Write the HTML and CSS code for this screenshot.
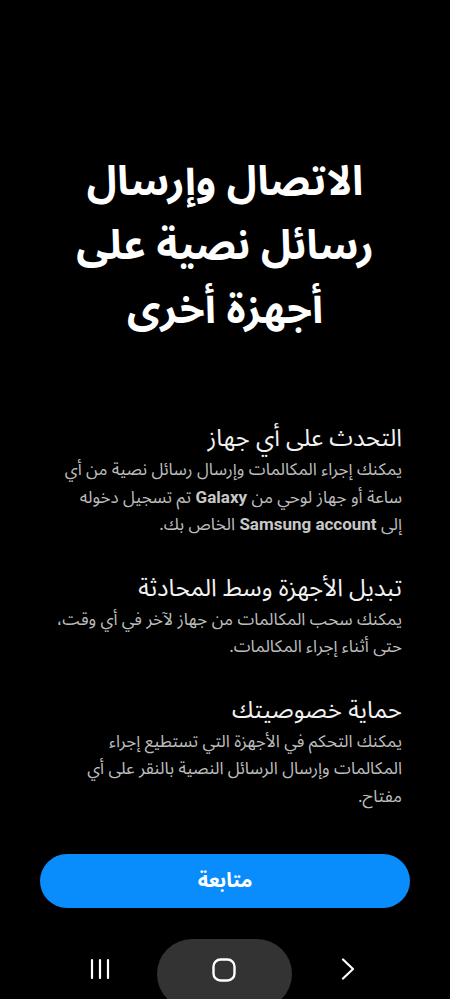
FILE: index.html
```html
<!DOCTYPE html>
<html lang="ar" dir="rtl">
<head>
    <meta charset="UTF-8">
    <meta name="viewport" content="width=device-width, initial-scale=1.0">
    <title>الاتصال وإرسال رسائل نصية</title>
    <link rel="stylesheet" href="styles.css">
</head>
<body>
    <div class="screen">
        <h1 class="title">الاتصال وإرسال رسائل نصية على أجهزة أخرى</h1>

        <div class="features">
            <div class="feature">
                <h2>التحدث على أي جهاز</h2>
                <p>يمكنك إجراء المكالمات وإرسال رسائل نصية من أي ساعة أو جهاز لوحي من <b>Galaxy</b> تم تسجيل دخوله إلى&nbsp;<b>Samsung&nbsp;account</b> الخاص بك.</p>
            </div>
            <div class="feature">
                <h2>تبديل الأجهزة وسط المحادثة</h2>
                <p>يمكنك سحب المكالمات من جهاز لآخر في أي وقت، حتى أثناء إجراء المكالمات.</p>
            </div>
            <div class="feature">
                <h2>حماية خصوصيتك</h2>
                <p>يمكنك التحكم في الأجهزة التي تستطيع إجراء المكالمات وإرسال الرسائل النصية بالنقر على أي مفتاح.</p>
            </div>
        </div>

        <button class="continue">متابعة</button>

        <nav class="navbar" dir="ltr">
            <span class="nav-btn">
                <svg width="22" height="22" viewBox="0 0 22 22"><path d="M3 2v18M11 2v18M19 2v18" stroke="#fff" stroke-width="2.2" stroke-linecap="round"/></svg>
            </span>
            <span class="nav-home">
                <svg width="24" height="24" viewBox="0 0 24 24"><rect x="1.5" y="1.5" width="21" height="21" rx="7" fill="none" stroke="#fff" stroke-width="2.4"/></svg>
            </span>
            <span class="nav-btn">
                <svg width="22" height="22" viewBox="0 0 22 22"><path d="M6 1.5l10 9.5-10 9.5" fill="none" stroke="#fff" stroke-width="2.2" stroke-linecap="round" stroke-linejoin="round"/></svg>
            </span>
        </nav>
    </div>
</body>
</html>
```

FILE: styles.css
```css
* {
    margin: 0;
    padding: 0;
    box-sizing: border-box;
}

body {
    background: #000;
    color: #fff;
    font-family: 'Noto Sans Arabic', 'DejaVu Sans', 'Noto Sans', sans-serif;
}

.screen {
    width: 450px;
    height: 999px;
    display: flex;
    flex-direction: column;
    overflow: hidden;
}

.title {
    margin: 150px 66px 0;
    font-size: 41px;
    font-weight: bold;
    line-height: 64px;
    text-align: center;
}

.features {
    margin-top: 80px;
    padding: 0 48px;
    display: flex;
    flex-direction: column;
    gap: 32px;
}

.feature h2 {
    font-size: 24px;
    font-weight: normal;
    line-height: 34px;
    color: #f2f2f2;
}

.feature p {
    margin-top: 1px;
    font-size: 17px;
    line-height: 27.5px;
    color: #bdbdbd;
}

.feature b {
    font-family: 'Roboto', 'Liberation Sans', sans-serif;
    line-height: 1;
    color: #c8c8c8;
}

.continue {
    margin: auto 40px 0;
    height: 54px;
    border: none;
    border-radius: 27px;
    background: #0a8dfc;
    color: #fff;
    font-family: inherit;
    font-size: 20px;
    font-weight: bold;
}

.navbar {
    margin-top: 31px;
    height: 60px;
    display: flex;
    justify-content: space-between;
    align-items: flex-start;
    padding: 0 80px 0 78px;
}

.nav-btn {
    width: 44px;
    height: 60px;
    display: flex;
    align-items: center;
    justify-content: center;
}

.nav-home {
    width: 135px;
    height: 70px;
    border-radius: 35px;
    background: #333;
    display: flex;
    align-items: flex-start;
    justify-content: center;
    padding-top: 19px;
}
```
